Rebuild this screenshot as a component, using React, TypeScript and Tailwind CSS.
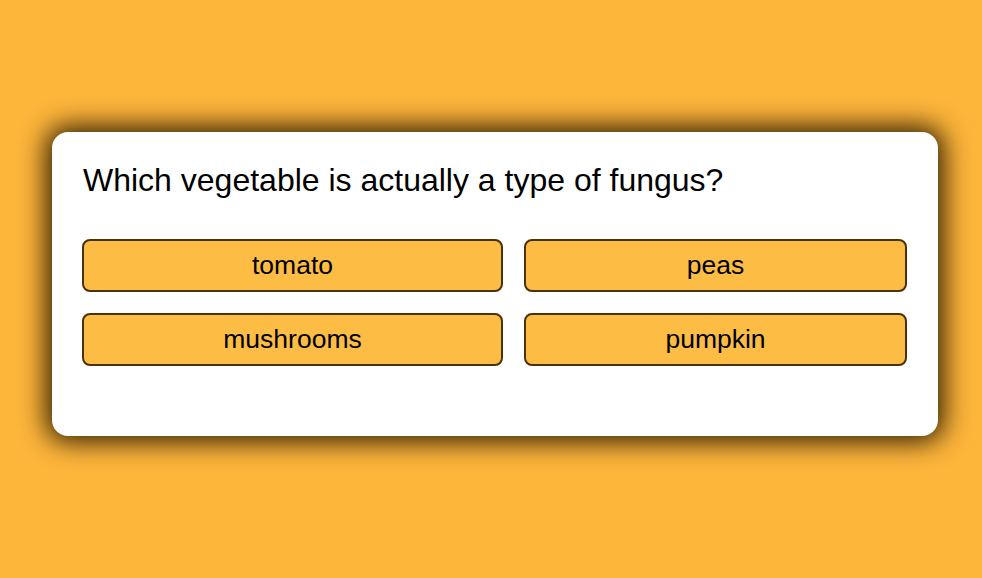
import React from "react";

export default function App() {
  const opts = ["tomato", "peas", "mushrooms", "pumpkin"];
  return (
    <div
      className="w-[982px] h-[578px] bg-[#fdb53a] pl-[52px] pt-[132px] overflow-hidden"
      style={{ fontFamily: '"Liberation Sans", Arial, sans-serif' }}
    >
      <div className="w-[886px] h-[304px] bg-white rounded-[16px] pt-[28px] px-[30px] shadow-[0_0_26px_6px_rgba(40,25,0,0.95)]">
        <h1 className="text-[32px] leading-[40px] text-black ml-[1px]">
          Which vegetable is actually a type of fungus?
        </h1>
        <div className="mt-[39px] grid grid-cols-[421px_383px] gap-x-[21px] gap-y-[21px]">
          {opts.map((o) => (
            <button
              key={o}
              className="h-[53px] bg-[#fdbd45] border-2 border-[#4a3208] rounded-[8px] text-[26.5px] leading-none text-black"
              style={{ fontFamily: '"Liberation Sans", Arial, sans-serif' }}
            >
              {o}
            </button>
          ))}
        </div>
      </div>
    </div>
  );
}
